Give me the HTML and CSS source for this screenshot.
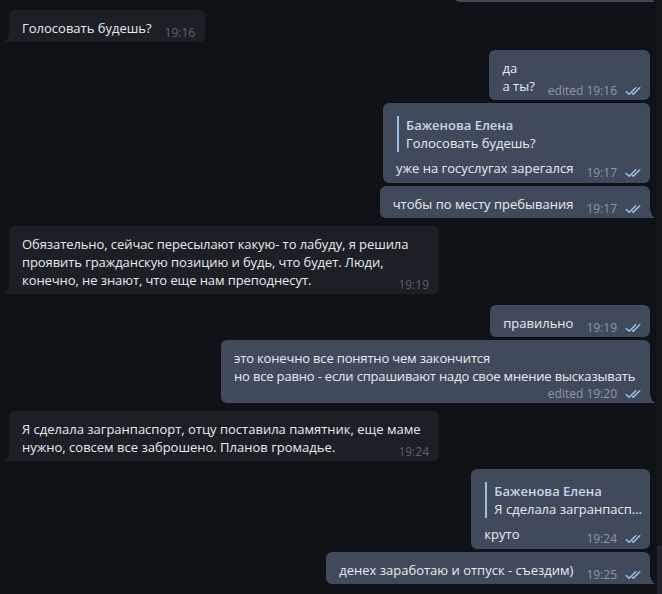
FILE: index.html
```html
<!DOCTYPE html>
<html lang="ru">
<head>
<meta charset="utf-8">
<title>Chat</title>
<link rel="stylesheet" href="styles.css">
</head>
<body>
<div class="app">
  <div class="chat">
    <div class="row out">
      <div class="bubble out-b tail-out clipped"></div>
    </div>

    <div class="row in gap-g">
      <div class="bubble in-b tail-in">
        <div class="text">Голосовать будешь?<span class="meta"><span class="time">19:16</span></span></div>
      </div>
    </div>

    <div class="row out gap-g">
      <div class="bubble out-b">
        <div class="text">да<br>а ты?<span class="meta"><span class="time">edited 19:16</span><svg class="checks" viewBox="0 0 17 10"><path d="M1.2 5.4 L4.2 8.3 L10.8 1.7"/><path d="M7.4 7.5 L8.2 8.3 L14.8 1.7"/></svg></span></div>
      </div>
    </div>

    <div class="row out gap-s">
      <div class="bubble out-b has-reply">
        <div class="reply">
          <div class="reply-name">Баженова Елена</div>
          <div class="reply-text">Голосовать будешь?</div>
        </div>
        <div class="text">уже на госуслугах зарегался<span class="meta"><span class="time">19:17</span><svg class="checks" viewBox="0 0 17 10"><path d="M1.2 5.4 L4.2 8.3 L10.8 1.7"/><path d="M7.4 7.5 L8.2 8.3 L14.8 1.7"/></svg></span></div>
      </div>
    </div>

    <div class="row out gap-s">
      <div class="bubble out-b tail-out">
        <div class="text">чтобы по месту пребывания<span class="meta"><span class="time">19:17</span><svg class="checks" viewBox="0 0 17 10"><path d="M1.2 5.4 L4.2 8.3 L10.8 1.7"/><path d="M7.4 7.5 L8.2 8.3 L14.8 1.7"/></svg></span></div>
      </div>
    </div>

    <div class="row in gap-g">
      <div class="bubble in-b tail-in wide">
        <div class="text tight-1">Обязательно, сейчас пересылают какую- то лабуду, я решила<br>проявить гражданскую позицию и будь, что будет. Люди,<br>конечно, не знают, что еще нам преподнесут.<span class="meta"><span class="time">19:19</span></span></div>
      </div>
    </div>

    <div class="row out gap-l">
      <div class="bubble out-b">
        <div class="text">правильно<span class="meta"><span class="time">19:19</span><svg class="checks" viewBox="0 0 17 10"><path d="M1.2 5.4 L4.2 8.3 L10.8 1.7"/><path d="M7.4 7.5 L8.2 8.3 L14.8 1.7"/></svg></span></div>
      </div>
    </div>

    <div class="row out gap-s">
      <div class="bubble out-b tail-out wide">
        <div class="text tight-2">это конечно все понятно чем закончится<br>но все равно - если спрашивают надо свое мнение высказывать</div>
        <div class="meta-row"><span class="time">edited 19:20</span><svg class="checks" viewBox="0 0 17 10"><path d="M1.2 5.4 L4.2 8.3 L10.8 1.7"/><path d="M7.4 7.5 L8.2 8.3 L14.8 1.7"/></svg></div>
      </div>
    </div>

    <div class="row in gap-g">
      <div class="bubble in-b tail-in wide">
        <div class="text">Я сделала загранпаспорт, отцу поставила памятник, еще маме<br>нужно, совсем все заброшено. Планов громадье.<span class="meta"><span class="time">19:24</span></span></div>
      </div>
    </div>

    <div class="row out gap-g">
      <div class="bubble out-b has-reply">
        <div class="reply">
          <div class="reply-name">Баженова Елена</div>
          <div class="reply-text">Я сделала загранпасп...</div>
        </div>
        <div class="text">круто<span class="meta"><span class="time">19:24</span><svg class="checks" viewBox="0 0 17 10"><path d="M1.2 5.4 L4.2 8.3 L10.8 1.7"/><path d="M7.4 7.5 L8.2 8.3 L14.8 1.7"/></svg></span></div>
      </div>
    </div>

    <div class="row out gap-s">
      <div class="bubble out-b tail-out">
        <div class="text">денех заработаю и отпуск - съездим)<span class="meta"><span class="time">19:25</span><svg class="checks" viewBox="0 0 17 10"><path d="M1.2 5.4 L4.2 8.3 L10.8 1.7"/><path d="M7.4 7.5 L8.2 8.3 L14.8 1.7"/></svg></span></div>
      </div>
    </div>
  </div>
  <div class="scrollbar"><div class="thumb"></div></div>
</div>
</body>
</html>
```

FILE: styles.css
```css
:root {
  --bg: #0f1217;
  --in: #1c1f25;
  --out: #414a5a;
  --text: #e8ebef;
  --time-in: #5c626b;
  --time-out: #8d98a8;
  --check: #9fc6f0;
  --reply-bar: #9cc0ea;
  --reply-name: #c7d6e8;
}

* { box-sizing: border-box; }

html, body {
  margin: 0;
  height: 100%;
  background: var(--bg);
  overflow: hidden;
}

body {
  font-family: "Open Sans", "Noto Sans", sans-serif;
  font-size: 13px;
  color: var(--text);
}

.app {
  display: flex;
  height: 594px;
}

.chat {
  flex: 1;
  display: flex;
  flex-direction: column;
  padding: 0 7px 0 9px;
}

.scrollbar {
  width: 5px;
  background: #13161b;
  display: flex;
  flex-direction: column;
  justify-content: flex-end;
}

.thumb {
  height: 48px;
  background: #22262c;
}

.row {
  display: flex;
}
.row.in { justify-content: flex-start; }
.row.out { justify-content: flex-end; }

.gap-s { margin-top: 3px; }
.gap-g { margin-top: 8px; }
.gap-l { margin-top: 11px; }

.bubble {
  position: relative;
  max-width: 430px;
  border-radius: 6px;
  padding: 9px 10px 5px 13px;
  line-height: 18px;
}

.in-b { background: var(--in); }
.out-b { background: var(--out); padding-right: 8px; }
.has-reply { padding-bottom: 6px; }

.wide { width: 430px; }
.out-b.wide { width: 429px; }

.clipped {
  width: 196px;
  height: 32px;
  margin-top: -30px;
}

.tail-out { border-bottom-right-radius: 0; }
.tail-out::after {
  content: "";
  position: absolute;
  right: -6px;
  bottom: 0;
  width: 6px;
  height: 11px;
  background: radial-gradient(6px 11px at 100% 0, transparent 97%, var(--out) 100%);
}

.tail-in { border-bottom-left-radius: 0; }
.tail-in::after {
  content: "";
  position: absolute;
  left: -6px;
  bottom: 0;
  width: 6px;
  height: 11px;
  background: radial-gradient(6px 11px at 0 0, transparent 97%, var(--in) 100%);
}

.text { white-space: nowrap; }
.tight-1 { letter-spacing: -0.08px; }
.tight-2 { letter-spacing: -0.17px; }

.meta {
  float: right;
  height: 18px;
  line-height: 28px;
  margin-left: 13px;
  font-size: 12px;
  letter-spacing: 0;
  white-space: nowrap;
}

.meta-row {
  height: 13px;
  line-height: 18px;
  font-size: 12px;
  text-align: right;
  white-space: nowrap;
}

.in-b .time { color: var(--time-in); }
.out-b .time { color: var(--time-out); }

.checks {
  width: 17px;
  height: 10px;
  margin-left: 8px;
  vertical-align: -1px;
  fill: none;
  stroke: var(--check);
  stroke-width: 1.4;
  stroke-linecap: round;
  stroke-linejoin: round;
}

.reply {
  margin: 4px 0 7px 1px;
  border-left: 2px solid var(--reply-bar);
  padding-left: 7px;
  line-height: 18px;
}

.reply-name {
  color: var(--reply-name);
  font-weight: 600;
}

.reply-text {
  white-space: nowrap;
}
```
